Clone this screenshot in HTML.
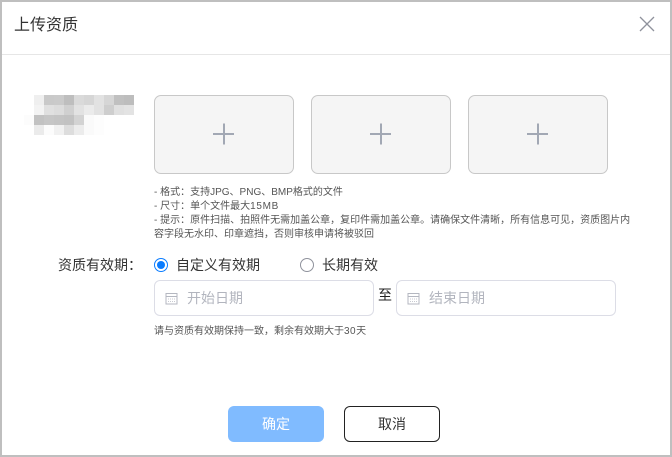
<!DOCTYPE html>
<html lang="zh-CN">
<head>
<meta charset="utf-8">
<title>上传资质</title>
<style>
html,body{margin:0;padding:0;background:#fff}
body{width:672px;height:457px;position:relative;overflow:hidden;font-family:"Liberation Sans","Noto Sans CJK SC",sans-serif;color:#333}
.a{position:absolute;white-space:nowrap}
.frame{position:absolute;left:0;top:0;width:672px;height:457px;box-sizing:border-box;border:2px solid #bfbfbf;pointer-events:none}
.box{position:absolute;top:95px;width:140px;height:79px;box-sizing:border-box;background:#f5f5f5;border:1px solid #c8c8c8;border-radius:7px}
.box svg{position:absolute;left:58px;top:27px}
.tip{font-size:10px;line-height:14px;color:#555}
.m{position:absolute;height:10px;width:10px}
.radio{position:absolute;box-sizing:border-box;width:14px;height:14px;border-radius:50%;top:258px}
.inp{position:absolute;top:280px;height:36px;box-sizing:border-box;background:#fff;border:1px solid #dcdde6;border-radius:6px}
.ph{position:absolute;top:0;font-size:14px;line-height:34px;color:#b2b5be;white-space:nowrap}
.inp svg{position:absolute;left:10px;top:11px}
.btn{position:absolute;top:406px;width:96px;height:36px;box-sizing:border-box;border-radius:6px;font-size:14px;line-height:36px;text-align:center}
</style>
</head>
<body>
<div class="a" style="left:14px;top:15px;font-size:16px;line-height:22px;color:#333">上传资质</div>
<svg class="a" style="left:639px;top:16px" width="16" height="16" viewBox="0 0 16 16"><path d="M1 1L15 15M15 1L1 15" stroke="#8f929c" stroke-width="1.3" fill="none"/></svg>
<div class="a" style="left:2px;top:54px;width:668px;height:1px;background:#e6e6e6"></div>

<div class="m" style="left:34px;top:95px;background:#efefef"></div>
<div class="m" style="left:44px;top:95px;background:#c9c9c9"></div>
<div class="m" style="left:54px;top:95px;background:#cacaca"></div>
<div class="m" style="left:64px;top:95px;background:#bebebe"></div>
<div class="m" style="left:74px;top:95px;background:#dadada"></div>
<div class="m" style="left:84px;top:95px;background:#d6d6d6"></div>
<div class="m" style="left:94px;top:95px;background:#e2e2e2"></div>
<div class="m" style="left:104px;top:95px;background:#d6d6d6"></div>
<div class="m" style="left:114px;top:95px;background:#c0c0c0"></div>
<div class="m" style="left:124px;top:95px;background:#bdbdbd"></div>
<div class="m" style="left:34px;top:105px;background:#f3f3f3"></div>
<div class="m" style="left:44px;top:105px;background:#e0e0e0"></div>
<div class="m" style="left:54px;top:105px;background:#dcdcdc"></div>
<div class="m" style="left:64px;top:105px;background:#d0d0d0"></div>
<div class="m" style="left:74px;top:105px;background:#e2e2e2"></div>
<div class="m" style="left:84px;top:105px;background:#ebebeb"></div>
<div class="m" style="left:94px;top:105px;background:#e2e2e2"></div>
<div class="m" style="left:104px;top:105px;background:#cecece"></div>
<div class="m" style="left:114px;top:105px;background:#e0e0e0"></div>
<div class="m" style="left:124px;top:105px;background:#e3e3e3"></div>
<div class="m" style="left:24px;top:115px;background:#fcfcfc"></div>
<div class="m" style="left:34px;top:115px;background:#c2c2c2"></div>
<div class="m" style="left:44px;top:115px;background:#c6c6c6"></div>
<div class="m" style="left:54px;top:115px;background:#c4c4c4"></div>
<div class="m" style="left:64px;top:115px;background:#c2c2c2"></div>
<div class="m" style="left:74px;top:115px;background:#d3d3d3"></div>
<div class="m" style="left:84px;top:115px;background:#fafafa"></div>
<div class="m" style="left:94px;top:115px;background:#fdfdfd"></div>
<div class="m" style="left:34px;top:125px;background:#ebebeb"></div>
<div class="m" style="left:44px;top:125px;background:#fcfcfc"></div>
<div class="m" style="left:54px;top:125px;background:#f1f1f1"></div>
<div class="m" style="left:64px;top:125px;background:#dddddd"></div>
<div class="m" style="left:74px;top:125px;background:#ececec"></div>
<div class="m" style="left:84px;top:125px;background:#fafafa"></div>
<div class="m" style="left:94px;top:125px;background:#fdfdfd"></div>

<div class="box" style="left:154px"><svg width="22" height="22" viewBox="0 0 22 22"><path d="M0 11H21M11 0.5V21.5" stroke="#a2a8b4" stroke-width="2" fill="none"/></svg></div>
<div class="box" style="left:311px"><svg width="22" height="22" viewBox="0 0 22 22"><path d="M0 11H21M11 0.5V21.5" stroke="#a2a8b4" stroke-width="2" fill="none"/></svg></div>
<div class="box" style="left:468px"><svg width="22" height="22" viewBox="0 0 22 22"><path d="M0 11H21M11 0.5V21.5" stroke="#a2a8b4" stroke-width="2" fill="none"/></svg></div>

<div class="a tip" style="left:154px;top:186px">- 格式：支持JPG、PNG、BMP格式的文件</div>
<div class="a tip" style="left:154px;top:200px">- 尺寸：单个文件最大<span style="letter-spacing:.7px">15MB</span></div>
<div class="a tip" style="left:154px;top:214px">- 提示：原件扫描、拍照件无需加盖公章，复印件需加盖公章。请确保文件清晰，所有信息可见，资质图片内</div>
<div class="a tip" style="left:154px;top:228px">容字段无水印、印章遮挡，否则审核申请将被驳回</div>

<div class="a" style="left:58px;top:255px;font-size:14px;line-height:20px;color:#333">资质有效期：</div>
<div class="radio" style="left:154px;border:1px solid #0a7cff;background:#fff"><div style="position:absolute;left:2px;top:2px;width:8px;height:8px;border-radius:50%;background:#0a7cff"></div></div>
<div class="a" style="left:176px;top:255px;font-size:14px;line-height:20px;color:#333">自定义有效期</div>
<div class="radio" style="left:300px;border:1px solid #8f929c;background:#fff"></div>
<div class="a" style="left:322px;top:255px;font-size:14px;line-height:20px;color:#333">长期有效</div>

<div class="inp" style="left:154px;width:220px">
<svg width="13" height="13" viewBox="0 0 13 13"><path d="M1 1.5H12V12H1ZM1 4.5H12" stroke="#b4b7c0" fill="none"/><path d="M3 7H10M3 9.5H10" stroke="#c8cad1" fill="none" stroke-dasharray="1 1"/></svg>
<div class="ph" style="left:32px">开始日期</div>
</div>
<div class="a" style="left:378px;top:285px;font-size:14px;line-height:20px;color:#222">至</div>
<div class="inp" style="left:396px;width:220px">
<svg width="13" height="13" viewBox="0 0 13 13"><path d="M1 1.5H12V12H1ZM1 4.5H12" stroke="#b4b7c0" fill="none"/><path d="M3 7H10M3 9.5H10" stroke="#c8cad1" fill="none" stroke-dasharray="1 1"/></svg>
<div class="ph" style="left:32px">结束日期</div>
</div>
<div class="a tip" style="left:154px;top:325px">请与资质有效期保持一致，剩余有效期大于<span style="letter-spacing:.5px">30</span>天</div>

<div class="btn" style="left:228px;background:#80bbff;color:#fff">确定</div>
<div class="btn" style="left:344px;background:#fff;border:1px solid #222;line-height:34px;color:#333">取消</div>

<div class="frame"></div>
</body>
</html>
